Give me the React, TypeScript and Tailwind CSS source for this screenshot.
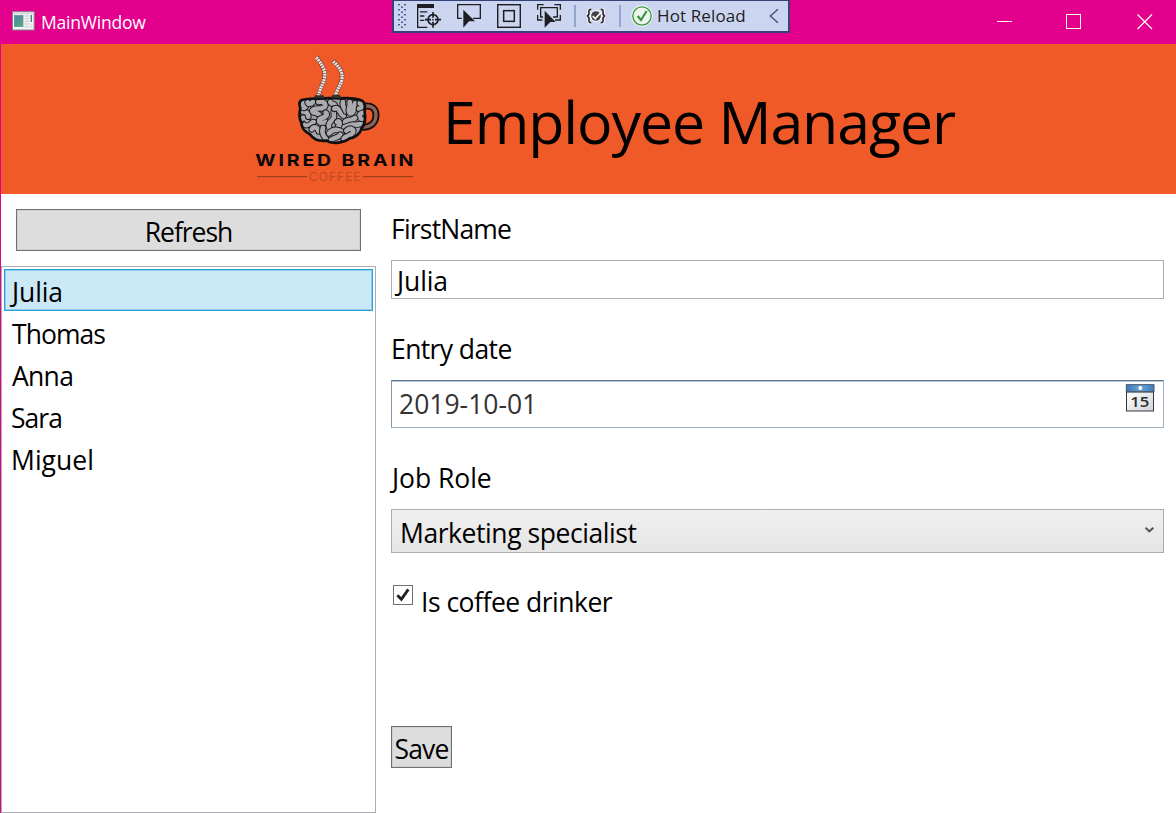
import React from "react";

const employees = [
  { name: "Julia", tracking: "tracking-[-0.1px] pl-[7px]" },
  { name: "Thomas", tracking: "tracking-[-0.95px] pl-[7px]" },
  { name: "Anna", tracking: "tracking-[-0.7px] pl-[7px]" },
  { name: "Sara", tracking: "tracking-[-0.95px] pl-[6px]" },
  { name: "Miguel", tracking: "tracking-[0.05px] pl-[6px]" },
];

function AppIcon() {
  return (
    <svg width="24" height="20" viewBox="0 0 72 60" className="shrink-0">
      <defs>
        <linearGradient id="appPane" x1="0" y1="0" x2="1" y2="1">
          <stop offset="0" stopColor="#4a7fb0" />
          <stop offset="1" stopColor="#58b078" />
        </linearGradient>
      </defs>
      <rect x="4.500" y="2" width="65" height="55" fill="#f4f4f4" stroke="#8a7f8c" strokeWidth="3" />
      <rect x="6" y="4" width="62" height="6" fill="#d4d8dc" />
      <rect x="10" y="13" width="26" height="34" fill="url(#appPane)" stroke="#5f8fa0" strokeWidth="2" />
      <path d="M41 15h14M41 23h14M41 31h14M41 39h14M41 47h14" stroke="#cfcfd2" strokeWidth="4" />
      <rect x="59" y="12" width="4" height="21" fill="#3b7a80" />
      <rect x="59" y="38" width="5" height="12" fill="#d8d8d8" />
    </svg>
  );
}

function LiveTreeIcon() {
  return (
    <svg width="24" height="24" viewBox="0 0 72 72" className="shrink-0" fill="none" stroke="#1f1f23" strokeWidth="4">
      <rect x="0" y="0" width="51" height="12" fill="#1f1f23" stroke="none" />
      <path d="M2 10V70H31M9 23.500H31M9 36H22M9 49H22" />
      <circle cx="48" cy="47" r="15" strokeWidth="5" />
      <path d="M48 24V41M48 53V71M24 47H42M54 47H72" strokeWidth="5" />
      <circle cx="48" cy="47" r="2.5" fill="#1f1f23" stroke="none" />
    </svg>
  );
}

function SelectElementIcon() {
  return (
    <svg width="24" height="24" viewBox="0 0 72 72" className="shrink-0">
      <path d="M14 43H2V2H70V43H48" fill="none" stroke="#1f1f23" strokeWidth="4" />
      <path d="M19 17L54 52H36L19 71Z" fill="#1f1f23" />
    </svg>
  );
}

function AdornersIcon() {
  return (
    <svg width="24" height="24" viewBox="0 0 72 72" className="shrink-0" fill="none" stroke="#1f1f23" strokeWidth="4.500">
      <rect x="2" y="2" width="68" height="68" />
      <rect x="20" y="20" width="32" height="32" />
    </svg>
  );
}

function TrackFocusIcon() {
  return (
    <svg width="24" height="24" viewBox="0 0 72 72" className="shrink-0">
      <g fill="none" stroke="#1f1f23" strokeWidth="4">
        <path d="M2 17V2H20M52 2H70V17M2 33V48H16M70 33V48H54" />
        <path d="M18 39H11V11H61V39H48" />
      </g>
      <path d="M23 20L56 54H40L23 71Z" fill="#1f1f23" />
    </svg>
  );
}

function BindingIcon() {
  const braces =
    "M16 4C7 4 9 10 9 15C9 21 8 23 3 24C8 25 9 27 9 33C9 38 7 44 16 44M44 4C53 4 51 10 51 15C51 21 52 23 57 24C52 25 51 27 51 33C51 38 53 44 44 44";
  return (
    <svg width="22" height="18" viewBox="-3 -3 66 54" className="shrink-0" fill="none">
      <path d={braces} stroke="#f5f5f8" strokeWidth="11" />
      <circle cx="30" cy="24" r="18" fill="#f5f5f8" />
      <path d={braces} stroke="#2b2b2e" strokeWidth="5" />
      <circle cx="30" cy="24" r="14.500" fill="#414145" />
      <path d="M20 24L28 32L46 12" stroke="#f5f5f8" strokeWidth="5" />
    </svg>
  );
}

function ReloadOkIcon() {
  return (
    <svg width="22" height="22" viewBox="0 0 66 66" className="shrink-0" fill="none">
      <circle cx="33" cy="33" r="32" fill="#f3f6f6" />
      <circle cx="33" cy="33" r="27.5" stroke="#38993b" strokeWidth="4" fill="#edf4ef" />
      <path d="M20 33L30 45L47 18" stroke="#2f9232" strokeWidth="6" />
    </svg>
  );
}

function DebugToolbar() {
  return (
    <div className="absolute top-0 left-[392px] flex h-[33px] w-[398px] items-start border-x-2 border-t border-b-2 border-[#364379] bg-[#ccd5f0] pt-[3px]">
      <svg width="8" height="26" viewBox="0 0 8 26" className="ml-[4px] shrink-0" fill="#4a5996">
        {[0, 5, 10, 15, 20].map((y) => (
          <g key={y}>
            <rect x="0" y={y} width="2" height="1.4" />
            <rect x="6" y={y} width="2" height="1.4" />
            <rect x="3" y={y + 2.5} width="2" height="1.4" />
          </g>
        ))}
      </svg>
      <div className="ml-[11px] flex gap-4">
        <LiveTreeIcon />
        <SelectElementIcon />
        <AdornersIcon />
        <TrackFocusIcon />
      </div>
      <div className="mt-px ml-[13px] h-[22px] w-[2px] bg-[#93a5cf]" />
      <div className="mt-[3px] ml-[9px]">
        <BindingIcon />
      </div>
      <div className="mt-px ml-[12px] h-[22px] w-[2px] bg-[#93a5cf]" />
      <div className="mt-px ml-[10px]">
        <ReloadOkIcon />
      </div>
      <span className="ml-[4px] w-[90px] text-[17px] leading-[24px] tracking-[0.12px] whitespace-nowrap text-[#1e1e1e]">Hot Reload</span>
      <svg width="10" height="16" viewBox="0 0 30 48" className="mt-[4px] ml-[22px] shrink-0" fill="none" stroke="#3d4b85" strokeWidth="4">
        <path d="M27 4L4 24L27 44" />
      </svg>
    </div>
  );
}

function TitleBar() {
  return (
    <div className="flex h-[44px] items-start bg-[#e3008c] pl-[11px] text-white">
      <div className="pt-[11px]">
        <AppIcon />
      </div>
      <span className="ml-[6px] pt-[10px] text-[17.5px] leading-[24px] tracking-[-0.2px] whitespace-nowrap">MainWindow</span>
      <svg width="156" height="16" viewBox="0 0 156 16" className="mt-[14px] mr-[23px] ml-auto shrink-0" fill="none" stroke="#fff">
        <path d="M0 7.5H15" />
        <rect x="69.5" y="0.5" width="14" height="14" />
        <path d="M140.500 0.500L155 15M155 0.500L140.500 15" strokeWidth="1.200" />
      </svg>
    </div>
  );
}

const folds = [
  "M36 98C44 104 50 92 62 90",
  "M56 112C62 102 74 106 77 118",
  "M28 80C32 74 38 78 42 84",
  "M28 58C36 58 46 62 46 74",
  "M30 30C24 44 30 54 38 44",
  "M44 31C46 38 54 36 60 30",
  "M76 30C92 26 102 36 94 46C84 54 62 44 58 56C58 64 70 60 78 68",
  "M98 62C108 70 94 76 82 80C72 88 84 98 98 90",
  "M112 30C114 38 124 34 126 40",
  "M124 50C118 64 128 72 120 82C112 88 104 96 108 106",
  "M124 50C140 42 138 66 152 72",
  "M150 30C146 44 156 48 158 58",
  "M170 30C174 44 160 58 172 64C186 64 180 46 186 34",
  "M200 34C212 36 206 50 198 50",
  "M210 62C200 64 194 72 206 82",
  "M154 94C158 78 174 90 186 78",
  "M146 104C152 112 168 96 184 98C194 102 196 92 208 98",
  "M90 108C84 122 92 132 100 142",
  "M132 90C140 84 144 96 134 106",
  "M108 124C118 112 134 110 148 120",
  "M114 144C124 134 138 138 142 128",
  "M160 116C172 104 188 112 178 124C170 134 158 130 152 140",
];

function BrainLogo() {
  const cup =
    "M170 168C190 162 205 163 225 164C255 160 270 164 285 163C310 161 335 163 352 170C362 178 361 190 359 204C362 222 361 240 350 252C346 270 330 281 314 283C300 296 262 302 244 290C222 292 204 284 196 272C178 262 169 250 169 236C160 220 163 205 166 192C161 180 162 173 170 168Z";
  return (
    <svg width="180" height="150" viewBox="0 0 540 450" className="shrink-0" fill="none">
      <defs>
        <clipPath id="cupShape">
          <path d={cup} />
        </clipPath>
      </defs>
      <g strokeLinecap="butt">
        <path d="M214 38C228 58 242 76 239 98C236 120 222 136 220 160" stroke="#6d4034" strokeWidth="13" />
        <path d="M214 40C228 58 242 76 239 98C236 120 222 136 220 160" stroke="#e9e4e2" strokeWidth="10" strokeDasharray="6 2" />
        <path d="M265 50C279 66 294 82 291 104C288 126 274 136 271 158" stroke="#6d4034" strokeWidth="13" />
        <path d="M265 52C279 66 294 82 291 104C288 126 274 136 271 158" stroke="#e9e4e2" strokeWidth="10" strokeDasharray="6 2" />
      </g>
      <path d="M357 187C378 183 393 192 393 213C393 238 374 252 350 249" stroke="#17110f" strokeWidth="21" />
      <path d="M357 187C378 183 393 192 393 213C393 238 374 252 350 249" stroke="#8d6659" strokeWidth="10" />
      <path d={cup} fill="#a3a5a8" />
      <g clipPath="url(#cupShape)">
        <g transform="translate(144 144)" strokeLinecap="round" strokeLinejoin="round">
          {folds.map((d) => (
            <g key={d}>
              <path d={d} stroke="#1a1a1c" strokeWidth="20" />
              <path d={d} stroke="#a9abae" strokeWidth="14" />
            </g>
          ))}
        </g>
      </g>
      <path d={cup} stroke="#0f0f10" strokeWidth="8" strokeLinejoin="round" />
      <path d="M208 162L212 156H234L238 163M259 162L264 155H283L288 162" fill="#333" stroke="#2c2c2e" strokeWidth="4" />
      <text x="31" y="364.500" textLength="483" lengthAdjust="spacingAndGlyphs" fill="#080606" className="font-[Inter] text-[48px] font-bold tracking-[7px]">WIRED BRAIN</text>
      <text x="192" y="411" textLength="158" lengthAdjust="spacingAndGlyphs" fill="#b34722" className="font-[Inter] text-[33px] font-light tracking-[3px]">COFFEE</text>
      <path d="M37 398H186M355 398H504" stroke="#8f381b" strokeWidth="3" />
    </svg>
  );
}

function Header() {
  return (
    <header className="flex h-[150px] bg-[#f05a28] pl-[244px]">
      <BrainLogo />
      <h1 className="ml-[18px] pt-[37px] text-[59px] leading-[80px] tracking-[-1.07px] whitespace-nowrap text-black">Employee Manager</h1>
    </header>
  );
}

function CalendarIcon() {
  return (
    <svg width="30" height="29" viewBox="0 0 90 87" className="shrink-0">
      <defs>
        <linearGradient id="calHead" x1="0" y1="0" x2="1" y2="0">
          <stop offset="0" stopColor="#3a78b4" />
          <stop offset="0.500" stopColor="#6aa5d8" />
          <stop offset="1" stopColor="#3f7cb6" />
        </linearGradient>
        <linearGradient id="calBody" x1="0" y1="0" x2="1" y2="1">
          <stop offset="0" stopColor="#ffffff" />
          <stop offset="1" stopColor="#cfd3d8" />
        </linearGradient>
      </defs>
      <rect x="4.500" y="24" width="81" height="57" fill="url(#calBody)" stroke="#37383c" strokeWidth="3" />
      <rect x="4" y="2" width="83" height="21" fill="url(#calHead)" stroke="#44546a" strokeWidth="3" />
      <circle cx="46" cy="12" r="6" fill="#fff" />
      <text x="16" y="69" textLength="57" lengthAdjust="spacingAndGlyphs" fill="#2b2c30" className="font-['Open_Sans'] text-[43px] font-semibold">15</text>
    </svg>
  );
}

function EmployeeList() {
  return (
    <aside className="flex w-[375px] shrink-0 flex-col">
      <button className="mx-[15px] mt-[15px] h-[42px] border border-[#707070] bg-[#dddddd] text-center leading-[44px] tracking-[-1.05px] shadow-[inset_0_0_0_1px_#cfcfcf]">Refresh</button>
      <ul className="mt-[15px] flex-1 border border-[#abadb3] p-[2px]">
        {employees.map(({ name, tracking }, i) => (
          <li
            key={name}
            className={
              (i === 0
                ? "h-[42px] border border-[#26a0da] bg-[#cbe8f6] leading-[44px] shadow-[inset_0_0_0_1px_#8fcdec] "
                : "h-[42px] border border-transparent leading-[44px] ") + tracking
            }
          >
            {name}
          </li>
        ))}
      </ul>
    </aside>
  );
}

function EmployeeForm() {
  return (
    <main className="flex flex-1 flex-col items-stretch pt-[15px] pr-[12px] pl-[15px]">
      <label className="h-[36px] leading-[40px] tracking-[-0.8px]">FirstName</label>
      <div className="mt-[15px] h-[39px] border border-[#abadb3] pl-[5px] leading-[41px] tracking-[-0.1px]">Julia</div>
      <label className="mt-[30px] h-[36px] leading-[40px] tracking-[-0.6px]">Entry date</label>
      <div className="mt-[15px] flex h-[48px] justify-between border border-t-[#5c7590] border-r-[#a0b3c4] border-b-[#9fb2c2] border-l-[#7f95aa] pr-[8px] pl-[7px] shadow-[inset_0_1px_0_#b9c5d1]">
        <span className="leading-[47px] text-[#333333]">2019-10-01</span>
        <div className="pt-[3px]">
          <CalendarIcon />
        </div>
      </div>
      <label className="mt-[30px] h-[36px] pl-px leading-[40px] tracking-[-0.05px]">Job Role</label>
      <div className="mt-[15px] flex h-[44px] justify-between border border-[#acacac] bg-linear-to-b from-[#f0f0f0] to-[#e5e5e5] pr-[9px] pl-[8px]">
        <span className="leading-[46px] tracking-[-0.43px]">Marketing specialist</span>
        <svg width="9" height="8" viewBox="0 0 27 24" className="mt-[16px]" fill="none" stroke="#555" strokeWidth="6">
          <path d="M2 5L13 16L25 5" />
        </svg>
      </div>
      <div className="mt-[30px] flex h-[38px] items-start">
        <span className="mt-[2px] ml-[2px] flex h-[20px] w-[20px] items-center justify-center border border-[#707070] bg-white">
          <svg width="14" height="14" viewBox="0 0 42 42" fill="none" stroke="#212121" strokeWidth="8.500">
            <path d="M4 22L16 34L37 4" />
          </svg>
        </span>
        <span className="ml-[8px] leading-[38px] tracking-[-0.5px]">Is coffee drinker</span>
      </div>
      <button className="mt-[105px] h-[42px] w-[61px] self-start border border-[#707070] bg-[#dddddd] text-center leading-[44px] tracking-[-0.8px] whitespace-nowrap shadow-[inset_0_0_0_1px_#cfcfcf]">Save</button>
    </main>
  );
}

export default function App() {
  return (
    <div className="relative flex h-[813px] w-[1176px] flex-col overflow-hidden bg-white font-['Open_Sans','Noto_Sans',sans-serif] text-[26.5px] text-black">
      <TitleBar />
      <div className="flex flex-1 flex-col border-l border-[#e3008c]">
        <Header />
        <div className="flex flex-1">
          <EmployeeList />
          <EmployeeForm />
        </div>
      </div>
      <DebugToolbar />
    </div>
  );
}
